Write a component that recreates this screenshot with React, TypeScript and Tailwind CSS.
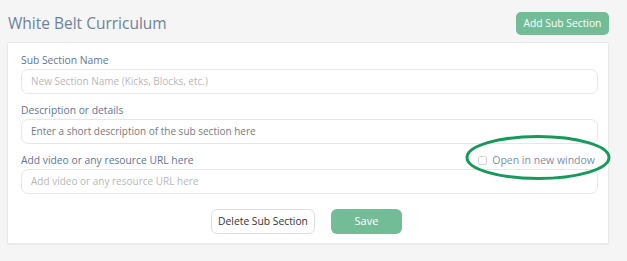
import React from "react";

const font = { fontFamily: '"Open Sans", "Noto Sans", sans-serif' };

function Field({ label, placeholder, dark, extra }: { label: string; placeholder: string; dark?: boolean; extra?: React.ReactNode }) {
  return (
    <div className="flex flex-col">
      <div className="flex h-[25px] items-end justify-between pb-[2px] leading-[14px]">
        <span className="text-[10.3px] text-[#5f7594]">{label}</span>
        {extra}
      </div>
      <div
        className={`flex h-[25px] items-center rounded-[7px] border border-[#e6e6e6] bg-white px-[9px] text-[10px] ${
          dark ? "text-[#7a7a7a]" : "text-[#b8b8b8]"
        }`}
      >
        {placeholder}
      </div>
    </div>
  );
}

export default function App() {
  return (
    <div className="relative h-[261px] w-[627px] overflow-hidden bg-[#f5f5f5]" style={font}>
      <div className="flex items-start justify-between pl-[8px] pr-[18px] pt-[12px]">
        <h1 className="text-[15.5px] leading-[22px] text-[#6f829c]">White Belt Curriculum</h1>
        <button className="h-[23px] w-[93px] rounded-[5px] bg-[#72bc98] text-[10.3px] text-white">Add Sub Section</button>
      </div>
      <div className="mx-[7px] mt-[7px] h-[202px] w-[602px] rounded-[2px] border border-[#e9e9e9] bg-white px-[13px] pt-[1px] shadow-[0_1px_1px_rgba(0,0,0,0.05)]">
        <div className="flex w-[577px] flex-col">
          <Field label="Sub Section Name" placeholder="New Section Name (Kicks, Blocks, etc.)" />
          <Field label="Description or details" placeholder="Enter a short description of the sub section here" dark />
          <Field
            label="Add video or any resource URL here"
            placeholder="Add video or any resource URL here"
            extra={
              <span className="flex items-center gap-[5px] pr-[3px] text-[10.5px] text-[#7d8ea5]">
                <span className="h-[9px] w-[9px] rounded-[2px] border border-[#d4d4d4] bg-white" />
                Open in new window
              </span>
            }
          />
        </div>
        <div className="mt-[15px] flex justify-center gap-[16px] pr-[3px]">
          <button className="h-[25px] w-[104px] rounded-[6px] border border-[#dedede] bg-white text-[10.3px] text-[#333]">
            Delete Sub Section
          </button>
          <button className="h-[25px] w-[71px] rounded-[6px] bg-[#72bc98] text-[11px] text-white">Save</button>
        </div>
      </div>
      <svg className="pointer-events-none absolute left-[464px] top-[134px]" width="148" height="47" viewBox="0 0 148 47">
        <ellipse cx="74" cy="23.5" rx="71" ry="21" fill="none" stroke="#16995a" strokeWidth="3" />
      </svg>
    </div>
  );
}
